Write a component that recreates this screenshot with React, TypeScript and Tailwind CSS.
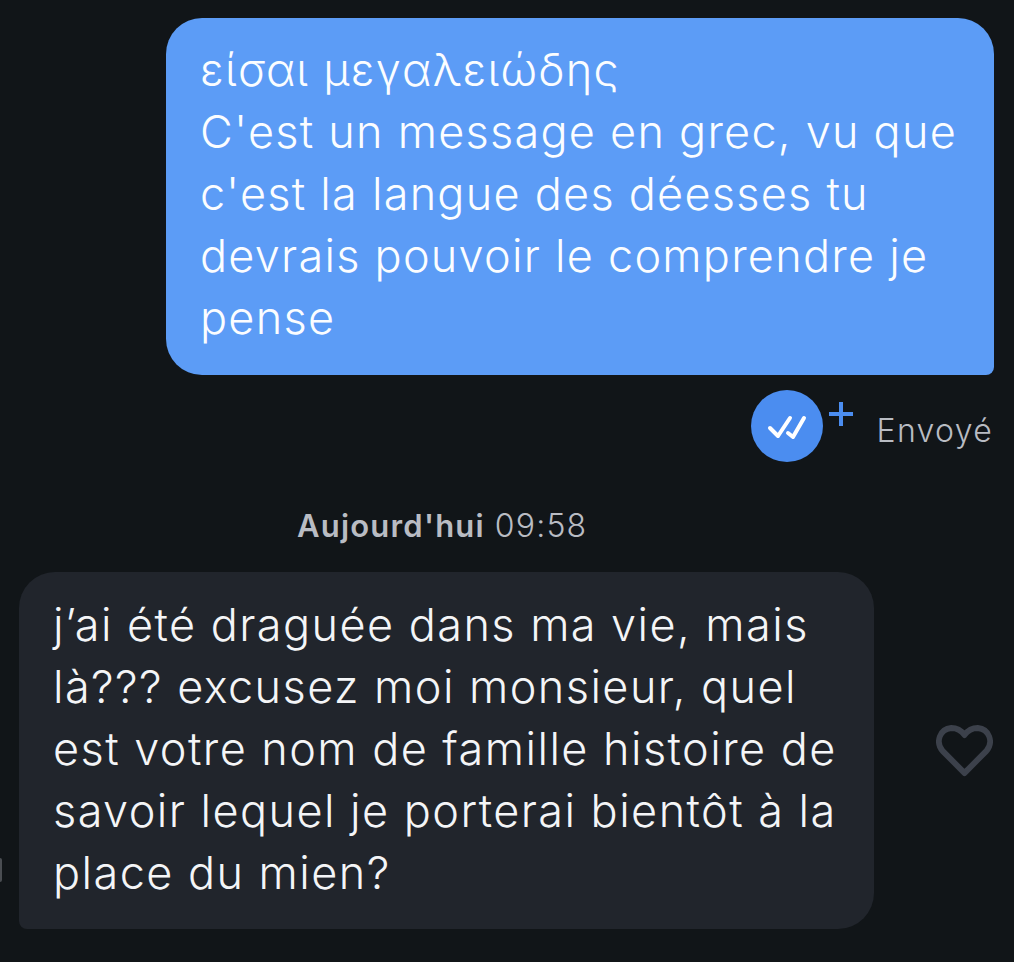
export default function App() {
  return (
    <div className="h-[962px] w-[1014px] overflow-hidden bg-[#111518] font-['Inter','Noto_Sans',sans-serif] relative">
      <div className="pt-[18px] pr-[20px] flex justify-end">
        <div className="w-[828px] h-[357px] bg-[#5c9cf6] rounded-[36px] rounded-br-[8px] pl-[34px] pr-[20px] pt-[21px] text-[45px] tracking-[1.25px] font-light leading-[62px] text-[#fbfdff]">
          <div className="whitespace-nowrap">είσαι μεγαλειώδης</div>
          <div className="whitespace-nowrap">C'est un message en grec, vu que</div>
          <div className="whitespace-nowrap">c'est la langue des déesses tu</div>
          <div className="whitespace-nowrap">devrais pouvoir le comprendre je</div>
          <div className="whitespace-nowrap">pense</div>
        </div>
      </div>
      <div className="mt-[15px] pr-[21px] flex justify-end items-center">
        <div className="relative w-[72px] h-[72px] rounded-full bg-[#4b8df0]">
          <svg width="72" height="72" viewBox="0 0 72 72" fill="none" stroke="white" strokeWidth="4" strokeLinecap="round" strokeLinejoin="round">
            <path d="M19 38l8 8 12-18" />
            <path d="M37 43l5 4 11-19" />
          </svg>
          <svg className="absolute left-[78px] top-[12px]" width="24" height="24" viewBox="0 0 24 24" fill="none" stroke="#4b8df0" strokeWidth="4">
            <path d="M12 0v24M0 12h24" />
          </svg>
        </div>
        <div className="ml-[54px] mt-[10px] text-[32px] tracking-[1.3px] font-light leading-[40px] text-[#b9bcc3]">Envoyé</div>
      </div>
      <div className="mt-[44px] pl-[297px] text-[31px] tracking-[1.2px] font-light leading-[40px] text-[#b9bcc3] whitespace-nowrap">
        <span className="font-semibold">Aujourd'hui</span> <span className="text-[32px]">09:58</span>
      </div>
      <div className="mt-[26px] pl-[19px] flex items-center">
        <div className="w-[855px] h-[357px] bg-[#21252c] rounded-[36px] rounded-bl-[8px] pl-[34px] pt-[22px] text-[45px] tracking-[1.45px] font-light leading-[62px] text-[#f4f5f7]">
          <div className="whitespace-nowrap">j’ai été draguée dans ma vie, mais</div>
          <div className="whitespace-nowrap">là??? excusez moi monsieur, quel</div>
          <div className="whitespace-nowrap">est votre nom de famille histoire de</div>
          <div className="whitespace-nowrap">savoir lequel je porterai bientôt à la</div>
          <div className="whitespace-nowrap">place du mien?</div>
        </div>
        <svg className="ml-[62px]" width="57" height="54" viewBox="0 0 60 54" preserveAspectRatio="none" fill="none" stroke="#3c414b" strokeWidth="6" strokeLinejoin="round">
          <path d="M30 49 L7 27 C-1 18 4 5 16 4 C22 4 27 7 30 11 C33 7 38 4 44 4 C56 5 61 18 53 27 Z" />
        </svg>
      </div>
      <div className="absolute left-0 top-[858px] w-[2px] h-[24px] rounded-r-full bg-[#4a4d52]" />
    </div>
  );
}
